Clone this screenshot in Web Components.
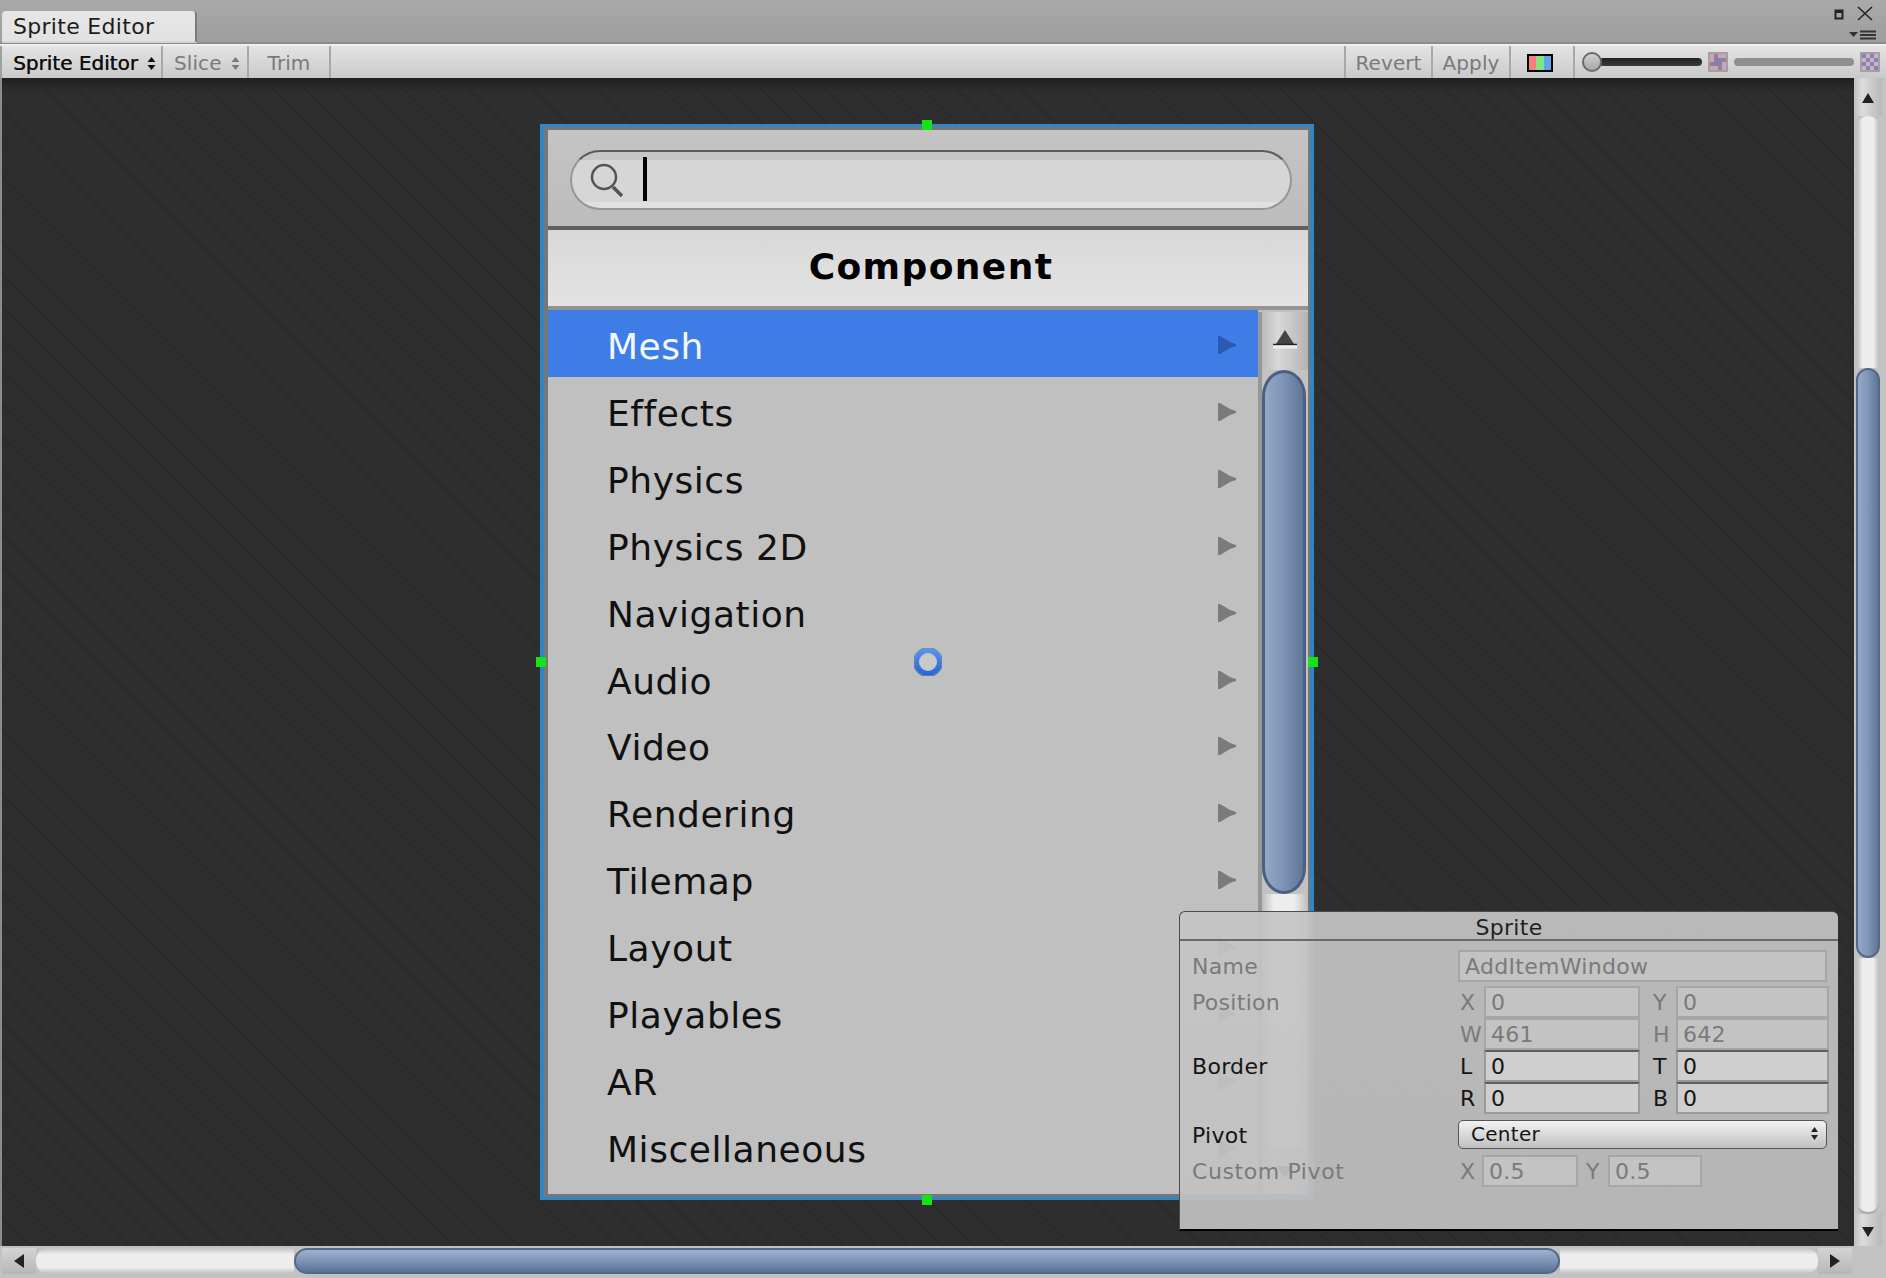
<!DOCTYPE html>
<html>
<head>
<meta charset="utf-8">
<title>Sprite Editor</title>
<style>
  html, body { margin: 0; padding: 0; height: 100%; overflow: hidden; background: #a2a2a2; }
  body { font-family: "DejaVu Sans", sans-serif; }
</style>
</head>
<body>
<sprite-app>
  <editor-titlebar slot="title">Sprite Editor</editor-titlebar>
  <editor-toolbar slot="toolbar"></editor-toolbar>
  <sprite-canvas slot="canvas">
    <sprite-frame>
      <menu-row selected>Mesh</menu-row>
      <menu-row>Effects</menu-row>
      <menu-row>Physics</menu-row>
      <menu-row>Physics 2D</menu-row>
      <menu-row>Navigation</menu-row>
      <menu-row>Audio</menu-row>
      <menu-row>Video</menu-row>
      <menu-row>Rendering</menu-row>
      <menu-row>Tilemap</menu-row>
      <menu-row>Layout</menu-row>
      <menu-row>Playables</menu-row>
      <menu-row>AR</menu-row>
      <menu-row>Miscellaneous</menu-row>
    </sprite-frame>
    <sprite-inspector></sprite-inspector>
  </sprite-canvas>
  <v-scrollbar slot="vscroll"></v-scrollbar>
  <h-scrollbar slot="hscroll"></h-scrollbar>
</sprite-app>

<script>
class SpriteApp extends HTMLElement {
  constructor() {
    super();
    this.attachShadow({ mode: 'open' });
    this.shadowRoot.innerHTML = `
      <style>
        :host { display: grid; width: 1886px; height: 1278px; grid-template-columns: 1854px 32px; grid-template-rows: 44px 34px 1168px 32px; background: #c2c2c2; color: #111; font-family: "DejaVu Sans", sans-serif; }
        ::slotted([slot="title"]), ::slotted([slot="toolbar"]) { grid-column: 1 / 3; }
        .corner { background: #c2c2c2; }
      </style>
      <slot name="title"></slot>
      <slot name="toolbar"></slot>
      <slot name="canvas"></slot>
      <slot name="vscroll"></slot>
      <slot name="hscroll"></slot>
      <div class="corner"></div>
    `;
  }
}

class EditorTitlebar extends HTMLElement {
  constructor() {
    super();
    this.attachShadow({ mode: 'open' });
    this.shadowRoot.innerHTML = `
      <style>
        :host { display: flex; align-items: flex-end; justify-content: space-between; background: linear-gradient(#a9a9a9, #9e9e9e); padding-left: 2px; box-sizing: border-box; border-bottom: 2px solid #8b8b8b; }
        .tab { width: 195px; height: 32px; box-sizing: border-box; margin-bottom: -1px; padding-left: 11px; font-size: 22px; letter-spacing: .3px; line-height: 32px; color: #1c1c1c; background: linear-gradient(#e6e6e6, #e2e2e2); border-radius: 4px 4px 0 0; border-right: 2px solid #7c7c7c; border-bottom: 2px solid #d4d4d4; white-space: nowrap; }
        .icons { width: 56px; height: 42px; margin-right: 7px; }
      </style>
      <div class="tab"><slot></slot></div>
      <svg class="icons" viewBox="0 0 56 42">
        <rect x="12.500" y="10.500" width="7" height="8" fill="none" stroke="#222" stroke-width="2"/>
        <rect x="13" y="10" width="6" height="3" fill="#222"/>
        <path d="M35 7 L49 20 M49 7 L35 20" stroke="#222" stroke-width="1.500" fill="none"/>
        <path d="M26 32 h9 l-4.500 5 z" fill="#333"/>
        <path d="M37 31.500 h16 M37 35 h16 M37 38.500 h16" stroke="#333" stroke-width="1.800"/>
      </svg>
    `;
  }
}

class ToolButton extends HTMLElement {
  constructor() {
    super();
    this.attachShadow({ mode: 'open' });
    this.shadowRoot.innerHTML = `
      <style>
        :host { display: flex; align-items: center; justify-content: center; gap: 9px; box-sizing: border-box; height: 100%; padding-top: 2px; border-right: 2px solid #a8a8a8; font-size: 20px; letter-spacing: 0; color: #111; white-space: nowrap; text-shadow: .4px 0 0 currentColor; }
        :host([disabled]) { color: #7a7a7a; letter-spacing: .1px; text-shadow: none; }
        :host([dropdown]) { justify-content: flex-start; padding-left: 11px; }
        svg { display: none; }
        :host([dropdown]) svg { display: block; }
      </style>
      <slot></slot>
      <svg width="9" height="15" viewBox="0 0 9 15"><path d="M4.500 1 L8.500 6 H.5 Z M.5 9 H8.500 L4.500 14 Z" fill="currentColor"/></svg>
    `;
  }
}

class EditorToolbar extends HTMLElement {
  constructor() {
    super();
    this.attachShadow({ mode: 'open' });
    this.shadowRoot.innerHTML = `
      <style>
        :host { display: flex; height: 34px; box-sizing: border-box; border-top: 2px solid #ededed; background: linear-gradient(#e4e4e4, #c9c9c9); position: relative; z-index: 2; }
        tool-button { flex: none; }
        .edge { width: 2px; background: #a0a0a0; flex: none; }
        .space { flex: 1; border-right: 2px solid #a8a8a8; }
        .rgb { width: 26px; height: 18px; margin-right: 5px; box-sizing: border-box; border: 2px solid #000; background: linear-gradient(90deg, #fa7d7d 33%, #83e283 33% 66%, #5fa6e6 66%); }
        .sliders { display: flex; align-items: center; width: 311px; flex: none; padding-left: 7px; box-sizing: border-box; }
        .knob { width: 20px; height: 20px; margin-right: -3px; box-sizing: border-box; border: 2px solid #6a6a6a; border-radius: 50%; background: linear-gradient(#d0d0d0, #a8a8a8); position: relative; flex: none; }
        .bar { height: 8px; border-radius: 4px; flex: none; }
        .dark { width: 103px; background: linear-gradient(#222, #3a3a3a); }
        .grey { width: 120px; margin-left: 6px; background: #8f8f8f; }
        .checker { flex: none; margin-left: 6px; }
      </style>
      <div class="edge"></div>
      <tool-button dropdown style="width:161px">Sprite Editor</tool-button>
      <tool-button dropdown disabled style="width:86px">Slice</tool-button>
      <tool-button disabled style="width:82px">Trim</tool-button>
      <div class="space"></div>
      <tool-button disabled style="width:87px">Revert</tool-button>
      <tool-button disabled style="width:78px">Apply</tool-button>
      <tool-button style="width:64px"><div class="rgb"></div></tool-button>
      <div class="sliders">
        <div class="knob"></div>
        <div class="bar dark"></div>
        <svg class="checker" width="20" height="20" viewBox="-.5 -.5 5 5" shape-rendering="crispEdges"><rect x="-.5" y="-.5" width="5" height="5" fill="#a3a0a3"/><rect width="4" height="4" fill="#c4a8ba"/><path d="M1 0h1v1H1zM3 1h1v1H3zM0 2h1v1H0zM2 3h1v1H2z" fill="#a8788e"/><path d="M1 1h2v2H1z" fill="#8482aa"/></svg>
        <div class="bar grey"></div>
        <svg class="checker" width="20" height="20" viewBox="-.5 -.5 5 5" shape-rendering="crispEdges"><rect x="-.5" y="-.5" width="5" height="5" fill="#a3a0a3"/><rect width="4" height="4" fill="#cdb2c6"/><path d="M0 0h1v1H0zM2 0h1v1H2zM1 1h1v1H1zM3 1h1v1H3zM0 2h1v1H0zM2 2h1v1H2zM1 3h1v1H1zM3 3h1v1H3z" fill="#8a82ae"/></svg>
      </div>
    `;
  }
}

class SpriteCanvas extends HTMLElement {
  constructor() {
    super();
    this.attachShadow({ mode: 'open' });
    this.shadowRoot.innerHTML = `
      <style>
        :host { display: block; position: relative; overflow: visible; background:
          linear-gradient(#1f1f1f, rgba(45,45,45,0) 14px),
          repeating-linear-gradient(45deg, #2e2e2e 0 21px, #2a2a2a 21px 23px);
          box-shadow: inset 2px 0 #8c8c8c; }
      </style>
      <slot></slot>
    `;
  }
}

class SpriteFrame extends HTMLElement {
  constructor() {
    super();
    this.attachShadow({ mode: 'open' });
    this.shadowRoot.innerHTML = `
      <style>
        /* sprite rect sits on the free canvas */
        :host { display: block; position: absolute; left: 540px; top: 46px; width: 774px; height: 1076px; box-sizing: border-box; border: 3px solid #2f86c4; border-left-width: 4px; border-right-width: 4px; }
        .body { display: flex; flex-direction: column; height: 100%; box-sizing: border-box; border: 3px solid #777; border-left-width: 4px; border-right-width: 2px; background: #c0c0c0; }
        .search { flex: none; height: 96px; box-sizing: border-box; padding: 20px 16px 16px 22px; background: linear-gradient(#c4c4c4, #bcbcbc); border-bottom: 0; }
        .field { display: flex; align-items: center; height: 60px; box-sizing: border-box; border-radius: 30px; border: 2px solid #969696; border-top-color: #5c5c5c; background: linear-gradient(#c6c6c6 0 8px, #d6d6d6 8px 50px, #e0e0e0 50px); padding-left: 16px; }
        .field svg { flex: none; }
        .caret { width: 4px; height: 44px; background: #000; margin-left: 19px; margin-top: -2px; }
        .head { flex: none; height: 84px; box-sizing: border-box; border-top: 4px solid #606060; border-bottom: 4px solid #939393; display: flex; align-items: center; justify-content: center; padding-left: 6px; padding-bottom: 3px; background: linear-gradient(#d8d8d8, #e3e3e3); font-size: 36px; font-weight: bold; color: #000; letter-spacing: 1.4px; }
        .list { display: grid; grid-template-columns: 1fr 50px; flex: 1; min-height: 0; }
        .rows { display: grid; grid-auto-rows: 66.85px; align-content: start; }
        .bar { display: flex; flex-direction: column; box-sizing: border-box; border-left: 4px solid #979797; margin-top: 2px; background: #c2c2c2; }
        .btn { flex: none; height: 58px; display: flex; align-items: center; justify-content: center; padding-bottom: 4px; box-sizing: border-box; background: linear-gradient(90deg, #bcbcbc, #d8d8d8 35%, #b4b4b4); }
        .thumb { flex: none; height: 524px; margin: 0 2px 0 0; box-sizing: border-box; border: 3px solid #4c5f82; border-radius: 22px / 26px; background: linear-gradient(90deg, #93a7c6, #8298b8 40%, #5f7697); }
        .track { flex: 1; background: linear-gradient(90deg, #bdbdbd, #ededed 25%, #ededed 70%, #bdbdbd); }
        .down { flex: none; height: 44px; display: flex; align-items: center; justify-content: center; background: linear-gradient(90deg, #bcbcbc, #d8d8d8 35%, #b4b4b4); }
        .handle { position: absolute; width: 10px; height: 10px; background: #16e316; }
        .pivot { position: absolute; left: 370px; top: 521px; }
      </style>
      <div class="body">
        <div class="search">
          <div class="field">
            <svg width="36" height="40" viewBox="0 0 36 40"><circle cx="16" cy="17" r="12" fill="none" stroke="#555" stroke-width="2.500"/><path d="M25 27 L34 36" stroke="#555" stroke-width="3.500"/></svg>
            <div class="caret"></div>
          </div>
        </div>
        <div class="head">Component</div>
        <div class="list">
          <div class="rows"><slot></slot></div>
          <div class="bar">
            <div class="btn"><svg width="24" height="20" viewBox="0 0 24 20"><path d="M12 1 L21 15 H3 Z" fill="#444"/><path d="M0 15.500 H24" stroke="#222" stroke-width="1.500"/><path d="M0 18 H24" stroke="#eee" stroke-width="3"/></svg></div>
            <div class="thumb"></div>
            <div class="track"></div>
            <div class="down"><svg width="20" height="14" viewBox="0 0 20 14"><path d="M1 1 H19 L10 13 Z" fill="#444"/></svg></div>
          </div>
        </div>
      </div>
      <div class="handle" style="left:378px;top:-7px"></div>
      <div class="handle" style="left:-8px;top:530px"></div>
      <div class="handle" style="left:764px;top:530px"></div>
      <div class="handle" style="left:378px;top:1068px"></div>
      <svg class="pivot" width="28" height="28" viewBox="0 0 28 28"><defs><linearGradient id="ring" x1="0" y1="0" x2="0" y2="1"><stop offset="0" stop-color="#5b93e6"/><stop offset="1" stop-color="#2468d8"/></linearGradient></defs><circle cx="14" cy="14" r="12" fill="none" stroke="url(#ring)" stroke-width="6"/><circle cx="14" cy="14" r="14" fill="none" stroke="#8a8a8a" stroke-opacity=".6" stroke-width="1"/><circle cx="14" cy="14" r="8.500" fill="#c9c9c9"/></svg>
    `;
  }
}

class MenuRow extends HTMLElement {
  constructor() {
    super();
    this.attachShadow({ mode: 'open' });
    this.shadowRoot.innerHTML = `
      <style>
        :host { display: flex; align-items: center; justify-content: space-between; box-sizing: border-box; padding: 7px 22px 0 59px; font-size: 36px; letter-spacing: .55px; color: #111; white-space: nowrap; }
        :host([selected]) { background: #3f7de6; color: #f4f8ff; }
        svg { color: #7b7b7b; margin-top: -3px; }
        :host([selected]) svg { color: #2a5bb0; }
      </style>
      <slot></slot>
      <svg width="18" height="18" viewBox="0 0 18 18"><path d="M0 0 H2 L12 6 L18 8 V10 L12 12 L2 18 H0 Z" fill="currentColor"/></svg>
    `;
  }
}

class FieldBox extends HTMLElement {
  constructor() {
    super();
    this.attachShadow({ mode: 'open' });
    this.shadowRoot.innerHTML = `
      <style>
        :host { display: flex; align-items: center; box-sizing: border-box; height: 100%; padding: 1px 0 0 5px; font-size: 22px; letter-spacing: .3px; color: #7a7a7a; background: #c3c3c3; border: 2px solid #a6a6a6; white-space: nowrap; }
        :host([active]) { color: #151515; background: #cfcfcf; border-color: #9a9a9a; border-top-color: #5e5e5e; }
      </style>
      <slot></slot>
    `;
  }
}

class SpriteInspector extends HTMLElement {
  constructor() {
    super();
    this.attachShadow({ mode: 'open' });
    this.shadowRoot.innerHTML = `
      <style>
        /* floating panel over the canvas */
        :host { display: flex; flex-direction: column; position: absolute; left: 1179px; top: 833px; width: 659px; height: 320px; box-sizing: border-box; border: 1px solid #4c4c4c; border-right: 0; border-bottom: 2px solid #000; border-radius: 6px 6px 0 0; background: linear-gradient(rgba(197,197,197,.92), rgba(193,193,193,.92)); font-size: 22px; letter-spacing: .3px; color: #7a7a7a; }
        .title { flex: none; height: 29px; box-sizing: border-box; border-bottom: 2px solid #6a6a6a; text-align: center; line-height: 31px; color: #222; }
        .grid { display: grid; grid-template-columns: 12px 268px 24px 156px 13px 23px 153px; grid-template-rows: 32px 4px 32px 32px 32px 32px 6px 29px 6px 32px; padding: 9px 0 0 0; }
        .grid > span { display: flex; align-items: center; padding-top: 1px; white-space: nowrap; }
        .on { color: #151515; }
        .l { grid-column: 2; }
        .xa { grid-column: 3; }
        .fa { grid-column: 4; }
        .xb { grid-column: 6; }
        .fb { grid-column: 7; }
        .name { grid-column: 3 / 8; margin: 0 2px 0 -2px; }
        .drop { grid-column: 3 / 8; margin: 0 2px 0 -2px; box-sizing: border-box; display: flex; align-items: center; justify-content: space-between; padding: 0 8px 2px 12px; border: 1px solid #555; border-radius: 5px; background: linear-gradient(#f2f2f2, #c0c0c0); color: #151515; font-size: 20px; }
        .tiny { grid-column: 3 / 8; display: grid; grid-template-columns: 22px 96px 8px 22px 94px; }
        .tiny span { display: flex; align-items: center; padding-top: 1px; }
        .wide { letter-spacing: .6px; }
      </style>
      <div class="title">Sprite</div>
      <div class="grid">
        <span class="l" style="grid-row:1">Name</span>
        <field-box class="name" style="grid-row:1">AddItemWindow</field-box>

        <span class="l" style="grid-row:3">Position</span>
        <span class="xa" style="grid-row:3">X</span><field-box class="fa" style="grid-row:3">0</field-box>
        <span class="xb" style="grid-row:3">Y</span><field-box class="fb" style="grid-row:3">0</field-box>

        <span class="xa" style="grid-row:4">W</span><field-box class="fa" style="grid-row:4">461</field-box>
        <span class="xb" style="grid-row:4">H</span><field-box class="fb" style="grid-row:4">642</field-box>

        <span class="l on" style="grid-row:5">Border</span>
        <span class="xa on" style="grid-row:5">L</span><field-box active class="fa" style="grid-row:5">0</field-box>
        <span class="xb on" style="grid-row:5">T</span><field-box active class="fb" style="grid-row:5">0</field-box>

        <span class="xa on" style="grid-row:6">R</span><field-box active class="fa" style="grid-row:6">0</field-box>
        <span class="xb on" style="grid-row:6">B</span><field-box active class="fb" style="grid-row:6">0</field-box>

        <span class="l on" style="grid-row:8">Pivot</span>
        <div class="drop" style="grid-row:8">Center<svg width="7" height="13" viewBox="0 0 7 13"><path d="M3.500 0 L7 5 H0 Z M0 8 H7 L3.500 13 Z" fill="#222"/></svg></div>

        <span class="l wide" style="grid-row:10">Custom Pivot</span>
        <div class="tiny" style="grid-row:10">
          <span>X</span><field-box>0.5</field-box><span></span><span>Y</span><field-box>0.5</field-box>
        </div>
      </div>
    `;
  }
}

class VScrollbar extends HTMLElement {
  constructor() {
    super();
    this.attachShadow({ mode: 'open' });
    this.shadowRoot.innerHTML = `
      <style>
        :host { display: flex; flex-direction: column; box-sizing: border-box; padding-right: 4px; background: #c2c2c2; }
        .btn { flex: none; display: flex; align-items: center; justify-content: center; background: linear-gradient(90deg, #c0c0c0, #dcdcdc 30%, #b8b8b8); }
        .track { flex: none; margin: 0 3px; background: linear-gradient(90deg, #bdbdbd, #ededed 25%, #ededed 75%, #bdbdbd); }
        .top { height: 252px; border-radius: 12px 12px 0 0; }
        .bot { height: 254px; border-radius: 0 0 12px 12px; border-bottom: 2px solid #aaa; }
        .thumb { flex: none; height: 590px; margin: 0 2px; box-sizing: border-box; border: 2px solid #53678b; border-radius: 12px; background: linear-gradient(90deg, #96aac8, #7f95b6 50%, #5f7697); }
      </style>
      <div class="btn" style="height:36px;padding-top:2px"><svg width="14" height="12" viewBox="0 0 14 12"><path d="M7 1 L13 11 H1 Z" fill="#222"/></svg></div>
      <div class="track top"></div>
      <div class="thumb"></div>
      <div class="track bot"></div>
      <div class="btn" style="height:36px;padding-bottom:4px"><svg width="14" height="12" viewBox="0 0 14 12"><path d="M1 1 H13 L7 11 Z" fill="#222"/></svg></div>
    `;
  }
}

class HScrollbar extends HTMLElement {
  constructor() {
    super();
    this.attachShadow({ mode: 'open' });
    this.shadowRoot.innerHTML = `
      <style>
        :host { display: flex; align-items: stretch; box-sizing: border-box; padding: 2px 0 4px 2px; background: #c2c2c2; }
        .btn { flex: none; width: 34px; display: flex; align-items: center; justify-content: center; background: linear-gradient(#d4d4d4, #b6b6b6); }
        .track { flex: none; background: linear-gradient(#c4c4c4, #ededed 25%, #ededed 75%, #bdbdbd); }
        .left { width: 258px; border-radius: 12px 0 0 12px; }
        .right { width: 258px; border-radius: 0 12px 12px 0; }
        .thumb { flex: none; width: 1266px; box-sizing: border-box; border: 2px solid #53678b; border-radius: 13px; background: linear-gradient(#9eb0cc, #7e94b6 50%, #5a7095); }
      </style>
      <div class="btn"><svg width="12" height="14" viewBox="0 0 12 14"><path d="M11 0 V14 L1 7 Z" fill="#222"/></svg></div>
      <div class="track left"></div>
      <div class="thumb"></div>
      <div class="track right"></div>
      <div class="btn"><svg width="12" height="14" viewBox="0 0 12 14"><path d="M1 0 V14 L11 7 Z" fill="#222"/></svg></div>
    `;
  }
}

customElements.define('sprite-app', SpriteApp);
customElements.define('editor-titlebar', EditorTitlebar);
customElements.define('tool-button', ToolButton);
customElements.define('editor-toolbar', EditorToolbar);
customElements.define('sprite-canvas', SpriteCanvas);
customElements.define('sprite-frame', SpriteFrame);
customElements.define('menu-row', MenuRow);
customElements.define('field-box', FieldBox);
customElements.define('sprite-inspector', SpriteInspector);
customElements.define('v-scrollbar', VScrollbar);
customElements.define('h-scrollbar', HScrollbar);
</script>
</body>
</html>
